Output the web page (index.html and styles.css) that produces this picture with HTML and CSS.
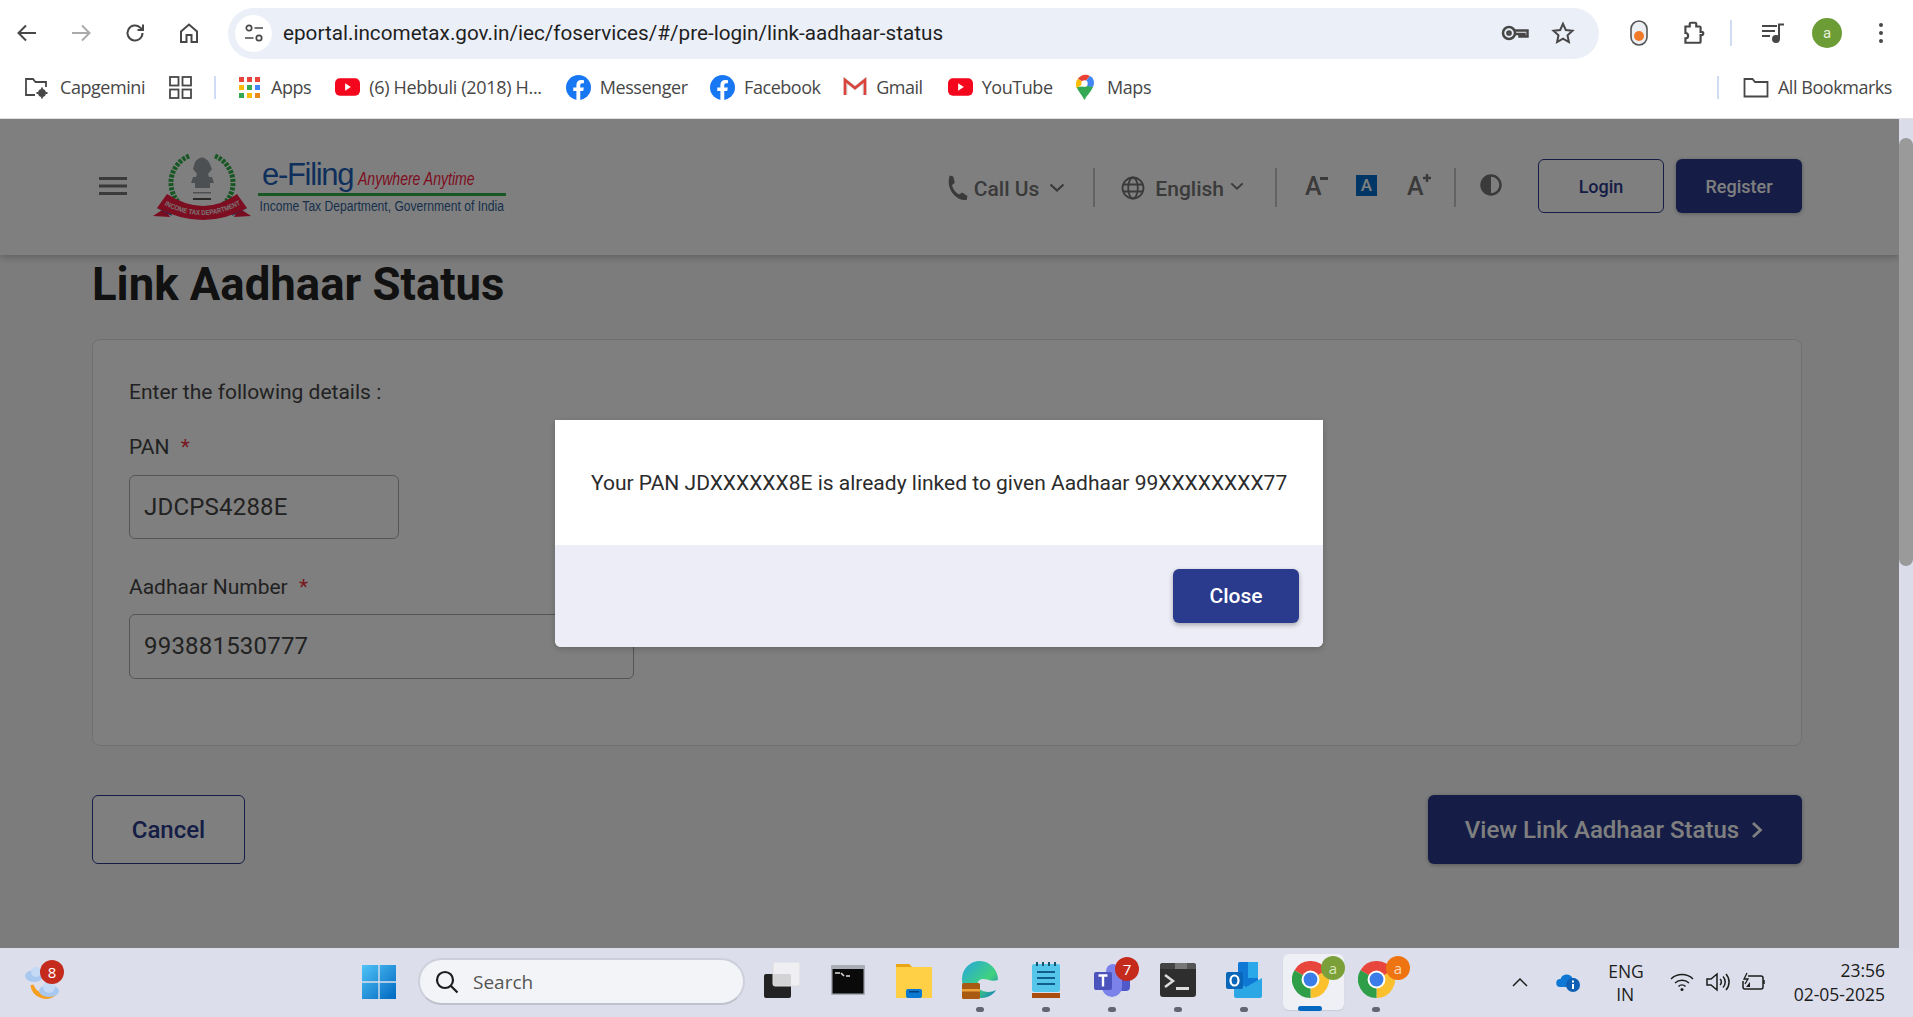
FILE: index.html
```html
<!DOCTYPE html>
<html lang="en">
<head>
<meta charset="utf-8">
<title>Link Aadhaar Status</title>
<link rel="stylesheet" href="styles.css">
</head>
<body>
<svg class="defs" width="0" height="0">
  <symbol id="chrome" viewBox="0 0 24 24">
    <path fill="#e8453c" d="M12 12L1.6 6A12 12 0 0 1 22.4 6Z"/>
    <path fill="#fbc02d" d="M12 12L22.4 6A12 12 0 0 1 12 24Z"/>
    <path fill="#2e9e48" d="M12 12L12 24A12 12 0 0 1 1.6 6Z"/>
    <circle cx="12" cy="12" r="5.8" fill="#fff"/>
    <circle cx="12" cy="12" r="4.5" fill="#3b7de8"/>
  </symbol>
  <symbol id="yt" viewBox="0 0 26 18">
    <rect width="26" height="18" rx="5" fill="#f4061d"/>
    <path fill="#fff" d="M10.5 5.2l6 3.8-6 3.8z"/>
  </symbol>
  <symbol id="fb" viewBox="0 0 24 24">
    <circle cx="12" cy="12" r="12" fill="#1877f2"/>
    <path fill="#fff" d="M16.5 15.4l.6-3.4h-3.4V9.8c0-1 .5-1.9 2-1.9h1.5V5c0 0-1.400-.2-2.700-.2-2.700 0-4.500 1.600-4.500 4.600V12h-3v3.400h3V24h3.700v-8.600z"/>
  </symbol>
</svg>

<div class="browser">
  <div class="toolbar">
    <div class="navbtn"><svg width="24" height="24" viewBox="0 0 24 24" class="ico"><path d="M21 12H4M11 4.500L3.500 12l7.500 7.500"/></svg></div>
    <div class="navbtn"><svg width="24" height="24" viewBox="0 0 24 24" class="ico ico-off"><path d="M3 12h17M13 4.500l7.500 7.500-7.500 7.500"/></svg></div>
    <div class="navbtn"><svg width="24" height="24" viewBox="0 0 24 24" class="ico"><path d="M19.500 12a7.500 7.500 0 1 1-2.400-5.500L20 9M20 3.500V9h-5.500"/></svg></div>
    <div class="navbtn"><svg width="24" height="24" viewBox="0 0 24 24" class="ico"><path d="M4 10.500L12 3.500l8 7V21h-5.500v-7h-5v7H4z"/></svg></div>
    <div class="omnibox">
      <span class="site-chip"><svg width="22" height="22" viewBox="0 0 22 22" class="ico ico-thin"><circle cx="6" cy="6" r="2.700"/><path d="M11.500 6H20M2 16h8.500"/><circle cx="16" cy="16" r="2.700"/></svg></span>
      <span class="url">eportal.incometax.gov.in/iec/foservices/#/pre-login/link-aadhaar-status</span>
      <svg class="omni-key ico" width="28" height="20" viewBox="0 0 28 20"><circle cx="8" cy="10" r="6"/><circle cx="8" cy="10" r="1.600"/><path d="M14 7.500h12.500v6h-3v-2.500h-2.500v2.500h-2.500v-2.500H14"/></svg>
      <svg class="omni-star ico" width="24" height="24" viewBox="0 0 24 24"><path d="M12 2.800l2.800 6.200 6.700.8-5 4.500 1.400 6.700-5.900-3.400-5.900 3.400 1.400-6.700-5-4.500 6.700-.8z"/></svg>
    </div>
    <svg class="ext-pill" width="18" height="26" viewBox="0 0 18 26"><rect x="1" y="1" width="16" height="24" rx="8" fill="#eceff4" stroke="#555" stroke-width="1.600"/><circle cx="9" cy="16" r="5" fill="#f07a28"/></svg>
    <svg class="ext-puzzle ico" width="26" height="26" viewBox="0 0 24 24"><path d="M5 6h4V3.500a1 1 0 0 1 1-1h4a1 1 0 0 1 1 1V6h3a1 1 0 0 1 1 1v4h1a1.500 1.500 0 0 1 0 3h-1v6a1 1 0 0 1-1 1H5v-4a2.500 2.500 0 0 0 0-5z"/></svg>
    <span class="tool-divider"></span>
    <svg class="media ico" width="26" height="24" viewBox="0 0 26 24"><path d="M2 5h15M2 10h13M2 15h8"/><path d="M19 18V3.500h5"/><circle cx="16" cy="18" r="3" class="solid"/></svg>
    <span class="avatar">a</span>
    <span class="kebab"><i></i><i></i><i></i></span>
  </div>
  <div class="bookmarks">
    <span class="bm bm-first"><svg width="26" height="26" viewBox="0 0 26 26" class="ico ico-mid"><path d="M12 21H3V5h7l2.500 3H23v5"/><circle cx="19" cy="19" r="3" class="solid"/><path d="M19 13.500v2M19 22.500v2M13.500 19h2M22.500 19h2"/></svg>Capgemini</span>
    <span class="bm bm-grid"><svg width="23" height="23" viewBox="0 0 23 23" class="ico ico-mid"><rect x="1" y="1" width="8.500" height="8.500"/><rect x="13.500" y="1" width="8.500" height="8.500"/><rect x="1" y="13.500" width="8.500" height="8.500"/><rect x="13.500" y="13.500" width="8.500" height="8.500"/></svg></span>
    <span class="bm-divider"></span>
    <span class="bm bm-apps"><svg width="21" height="21" viewBox="0 0 21 21"><g fill="#e8453c"><rect width="5" height="5"/><rect x="8" width="5" height="5"/><rect x="16" width="5" height="5"/></g><rect y="8" width="5" height="5" fill="#fbbc05"/><rect x="8" y="8" width="5" height="5" fill="#34a853"/><rect x="16" y="8" width="5" height="5" fill="#4285f4"/><rect y="16" width="5" height="5" fill="#34a853"/><rect x="8" y="16" width="5" height="5" fill="#fbbc05"/><rect x="16" y="16" width="5" height="5" fill="#ea8a1c"/></svg>Apps</span>
    <span class="bm bm-wide"><svg width="25" height="18"><use href="#yt"/></svg>(6) Hebbuli (2018) H...</span>
    <span class="bm bm-tight"><svg width="25" height="25"><use href="#fb"/></svg>Messenger</span>
    <span class="bm bm-tight"><svg width="25" height="25"><use href="#fb"/></svg>Facebook</span>
    <span class="bm bm-gmail"><svg width="24" height="20" viewBox="0 0 24 20"><path d="M2.500 18V3.500L12 11l9.500-7.500V18" fill="none" stroke="#d9d9d9" stroke-width="4"/><path d="M2 18V3l10 8 10-8v15" fill="none" stroke="#d9433a" stroke-width="2.600"/></svg>Gmail</span>
    <span class="bm bm-tight"><svg width="25" height="18"><use href="#yt"/></svg>YouTube</span>
    <span class="bm bm-maps"><svg width="19" height="26" viewBox="0 0 19 26"><path fill="#34a853" d="M9.500 26C7 21 3 17 1.500 13L14 12z"/><path fill="#fbbc05" d="M1.500 14C.3 10 1 7 3 4.500l6 5z"/><path fill="#ea4335" d="M3 4.500C5 1.500 10 -1 15 2L9 9z"/><path fill="#4285f4" d="M15 2c4 2 5 7 3 11l-5-.5-4-3z"/><path fill="#34a853" d="M18 13c-2 5-6 8-8.500 13L13 12z"/><circle cx="9.500" cy="9.500" r="3.200" fill="#fff"/></svg>Maps</span>
    <span class="bm-divider bm-divider-end"></span>
    <span class="bm"><svg width="26" height="22" viewBox="0 0 26 22" class="ico ico-mid"><path d="M1.500 3h8l2.500 3h12.500v14.500h-23z"/></svg>All Bookmarks</span>
  </div>
</div>

<div class="screen">
  <div class="viewport">
    <header class="site-header">
      <svg class="burger" width="28" height="18" viewBox="0 0 28 18"><path d="M0 0h28v3H0zM0 7.500h28v3H0zM0 15h28v3H0z"/></svg>
      <div class="logo">
        <svg class="seal" width="100" height="68" viewBox="0 0 100 68">
          <path d="M36 3A29 29 0 0 0 40 58M62 3A29 29 0 0 1 58 58" fill="none" stroke="#2fae46" stroke-width="5" stroke-dasharray="3 1.300"/>
          <path d="M42 9q7-9 14 0l3 7-4 5 1 3h3l2 6h-4v5H42v-5h-4l2-6h3l1-3-4-5zM40 39h18v1.500H40z" fill="#9aa0a6"/>
          <path d="M40 46h18" stroke="#555" stroke-width="2"/>
          <path d="M0 63l12-8 5 9z" fill="#f01a3e"/>
          <path d="M98 63l-12-8-5 9z" fill="#f01a3e"/>
          <path d="M4 55h12l3 8z" fill="#3a62b8"/>
          <path d="M94 55H82l-3 8z" fill="#3a62b8"/>
          <path d="M14 41Q51 65 84 41L94 55Q51 79 4 55Z" fill="#fa1a40"/>
          <path id="ribbon-arc" d="M6 49Q49 75 92 49" fill="none"/>
          <text class="seal-text" textLength="80" lengthAdjust="spacingAndGlyphs"><textPath href="#ribbon-arc" startOffset="6">INCOME TAX DEPARTMENT</textPath></text>
        </svg>
        <div class="logo-text">
          <div class="logo-top"><span class="efiling">e-Filing</span><span class="anywhere">Anywhere Anytime</span></div>
          <div class="logo-sub">Income Tax Department, Government of India</div>
        </div>
      </div>
      <nav class="site-nav">
        <svg class="n-phone" width="28" height="28" viewBox="0 0 24 24"><path d="M6.600 1.500l3.200.7 1.300 5.500-2.400 2.100c1 3.500 3 6.300 6 8l2.700-1.700 4.600 2.900-.7 3.500c-9.500.6-18-10-14.700-20.500z" transform="translate(-1 -1)"/></svg>
        <span class="nav-text n-call">Call Us</span>
        <svg class="chev" width="16" height="9" viewBox="0 0 16 9"><path d="M1.500 1.500L8 7.500l6.500-6"/></svg>
        <span class="nav-divider n-d1"></span>
        <svg class="n-globe" width="24" height="24" viewBox="0 0 24 24"><circle cx="12" cy="12" r="10.500"/><ellipse cx="12" cy="12" rx="4.800" ry="10.500"/><path d="M2 8.500h20M2 15.500h20"/></svg>
        <span class="nav-text n-eng">English</span>
        <svg class="chev n-c2" width="14" height="8" viewBox="0 0 16 9"><path d="M1.500 1.500L8 7.500l6.500-6"/></svg>
        <span class="nav-divider n-d2"></span>
        <span class="fontsize n-am">A<i class="f-minus"></i></span>
        <span class="fontbox">A</span>
        <span class="fontsize n-ap">A<i class="f-plus"></i></span>
        <span class="nav-divider n-d3"></span>
        <svg class="n-contrast" width="22" height="22" viewBox="0 0 22 22"><circle cx="11" cy="11" r="9.500" fill="none" stroke="#757575" stroke-width="2.500"/><path d="M11 1a10 10 0 0 0 0 20z" fill="#757575"/></svg>
        <a class="btn-outline btn-sm n-login">Login</a>
        <a class="btn-solid btn-sm n-reg">Register</a>
      </nav>
    </header>
    <main class="content">
      <h1 class="title">Link Aadhaar Status</h1>
      <section class="card">
        <p class="lead">Enter the following details :</p>
        <label class="label label-pan">PAN <b>*</b></label>
        <div class="field field-pan">JDCPS4288E</div>
        <label class="label label-aad">Aadhaar Number <b>*</b></label>
        <div class="field field-aad">993881530777</div>
      </section>
      <div class="actions">
        <a class="btn-outline btn-lg btn-cancel">Cancel</a>
        <a class="btn-solid btn-lg btn-view">View Link Aadhaar Status<svg width="12" height="18" viewBox="0 0 12 18"><path d="M2 2l7.500 7L2 16"/></svg></a>
      </div>
    </main>
    <div class="backdrop"></div>
    <div class="modal">
      <div class="modal-body">Your PAN JDXXXXXX8E is already linked to given Aadhaar 99XXXXXXXX77</div>
      <div class="modal-foot"><a class="btn-close">Close</a></div>
    </div>
  </div>
  <div class="scrollbar"><span class="thumb"></span></div>
</div>

<footer class="taskbar">
  <div class="weather">
    <svg width="40" height="42" viewBox="0 0 40 42"><path d="M8 24a14 14 0 0 0 24 8 16 16 0 0 1-24-8z" fill="#f59e1f" stroke="#f59e1f" stroke-width="3"/><ellipse cx="10" cy="15" rx="9" ry="6" fill="#a9c8ef"/><ellipse cx="12" cy="11" rx="5" ry="5" fill="#c4daf5"/><ellipse cx="25" cy="30" rx="10" ry="6" fill="#a9c8ef"/><ellipse cx="25" cy="26" rx="6" ry="6" fill="#c4daf5"/></svg>
    <span class="badge badge-weather">8</span>
  </div>
  <svg class="start" width="34" height="34" viewBox="0 0 34 34"><defs><linearGradient id="win" x1="0" y1="0" x2="1" y2="1"><stop offset="0" stop-color="#4fc3f7"/><stop offset="1" stop-color="#0067c0"/></linearGradient></defs><path fill="url(#win)" d="M0 0h16.300v16.300H0zM17.700 0H34v16.300H17.700zM0 17.700h16.300V34H0zM17.700 17.700H34V34H17.700z"/></svg>
  <div class="search"><svg width="24" height="24" viewBox="0 0 24 24"><circle cx="10" cy="10" r="8"/><path d="M16 16l6.500 6.500"/></svg><span>Search</span></div>
  <div class="apps">
    <div class="slot"><svg width="36" height="36" viewBox="0 0 36 36"><rect x="0" y="12" width="27" height="24" rx="2" fill="#222"/><rect x="9" y="0" width="27" height="24" rx="2" fill="#f2f2f4" fill-opacity=".85" stroke="#ddd"/></svg></div>
    <div class="slot"><svg width="34" height="30" viewBox="0 0 34 30"><rect width="34" height="30" rx="1" fill="#a9adb6"/><rect x="1.500" y="4" width="31" height="24.500" fill="#0a0a0a"/><path d="M4 8h5M10 8l3 3M15 11h4" stroke="#ddd" stroke-width="1.500"/></svg></div>
    <div class="slot"><svg width="36" height="36" viewBox="0 0 36 36"><path d="M0 2h13l3 3h20v31H0z" fill="#ffcf45"/><path d="M0 2h13l3 3H0z" fill="#e9a516"/><rect x="10" y="27" width="16" height="9" rx="2" fill="#0b78d1"/><rect x="13" y="29" width="10" height="1.500" fill="#053e78"/></svg></div>
    <div class="slot dot"><svg width="36" height="38" viewBox="0 0 36 38"><defs><linearGradient id="edge" x1="0" y1="0" x2="1" y2="1"><stop offset="0" stop-color="#26a6e0"/><stop offset=".6" stop-color="#40d27e"/><stop offset="1" stop-color="#0f6fc4"/></linearGradient></defs><path d="M18 0A18 18 0 0 0 0 18c0 8 4 15 14 19h6c6 0 12-4 14-8-5 3-16 3-18-4-1-4 1-7 5-7 5 0 8 3 15 1C36 9 28 0 18 0z" fill="url(#edge)"/><rect y="22" width="18" height="16" rx="1.500" fill="#a85a12"/><rect y="28" width="18" height="2.500" fill="#e9a23c"/></svg></div>
    <div class="slot dot"><svg width="28" height="36" viewBox="0 0 28 36"><rect y="2" width="28" height="28" rx="2" fill="#56c5ea"/><path d="M5 10h18M5 16h18M5 22h18" stroke="#0f5f8a" stroke-width="2"/><path d="M5 0v4M11 0v4M17 0v4M23 0v4" stroke="#14566f" stroke-width="2"/><rect y="31" width="28" height="5" fill="#a84c10"/></svg></div>
    <div class="slot dot"><svg width="36" height="34" viewBox="0 0 36 34"><circle cx="27" cy="10" r="6" fill="#7b83eb"/><rect x="17" y="14" width="19" height="14" rx="4" fill="#5059c9"/><circle cx="19" cy="8" r="7" fill="#7b83eb"/><path d="M8 12h20v12a10 10 0 0 1-20 0z" fill="#7b83eb"/><rect y="9" width="18" height="18" rx="2" fill="#4b53bc"/><path d="M4.500 12.500h9M9 12.500v11" stroke="#fff" stroke-width="2.400"/></svg><span class="badge badge-teams">7</span></div>
    <div class="slot dot"><svg width="36" height="34" viewBox="0 0 36 34"><rect width="36" height="34" rx="3" fill="#2e2e2e"/><path d="M0 3a3 3 0 0 1 3-3h12v6H0z" fill="#444"/><path d="M15 0h12v6H15z" fill="#777"/><path d="M27 0h6a3 3 0 0 1 3 3v3h-9z" fill="#555"/><path d="M5 12l8 6-8 6" fill="none" stroke="#ddd" stroke-width="2.500"/><rect x="16" y="24" width="13" height="3" fill="#ddd"/></svg></div>
    <div class="slot dot"><svg width="36" height="36" viewBox="0 0 36 36"><rect x="12" y="0" width="20" height="32" rx="1.500" fill="#0f78d4"/><path d="M22 0h10v8H22zM22 8h10v8H22z" fill="#29a8ea"/><path d="M8 18l12 7 16-9v18a2 2 0 0 1-2 2H10a2 2 0 0 1-2-2z" fill="#2ca7e6"/><rect y="10" width="17" height="17" rx="2" fill="#0a66b8"/><ellipse cx="8.500" cy="18.500" rx="4" ry="5" fill="none" stroke="#fff" stroke-width="2.200"/></svg></div>
    <div class="slot slot-active"><svg width="37" height="37"><use href="#chrome"/></svg><span class="badge badge-profile">a</span><span class="underline"></span></div>
    <div class="slot dot"><svg width="37" height="37"><use href="#chrome"/></svg><span class="badge badge-orange">a</span></div>
  </div>
  <div class="tray">
    <svg class="t-chev" width="16" height="10" viewBox="0 0 16 10"><path d="M1 9l7-7 7 7"/></svg>
    <svg class="t-cloud" width="24" height="20" viewBox="0 0 24 20"><path d="M4 15a4 4 0 0 1 .5-8 6.500 6.500 0 0 1 12-1 4.500 4.500 0 0 1 1 9z" fill="#0f78d4"/><circle cx="17" cy="13" r="7" fill="#0f5fb5"/><rect x="16" y="12" width="2" height="5" fill="#fff"/><rect x="16" y="8.500" width="2" height="2" fill="#fff"/></svg>
    <div class="t-lang">ENG<br>IN</div>
    <svg class="t-wifi" width="24" height="20" viewBox="0 0 24 20"><path d="M1 7a16 16 0 0 1 22 0M5 11a10.500 10.500 0 0 1 14 0M8.500 14.500a5 5 0 0 1 7 0"/><circle cx="12" cy="17.500" r="1.500" class="solid"/></svg>
    <svg class="t-vol" width="24" height="20" viewBox="0 0 24 20"><path d="M1 7v6h4l6 5V2L5 7zM14 7a4 4 0 0 1 0 6M17 4.500a8 8 0 0 1 0 11M20 2a12 12 0 0 1 0 16"/></svg>
    <svg class="t-batt" width="24" height="20" viewBox="0 0 24 20"><path d="M6 4h13a2 2 0 0 1 2 2v9a2 2 0 0 1-2 2H3a2 2 0 0 1-2-2V9"/><path d="M22 8v4"/><path d="M5 1L2 7h4l-3 5" class="thin"/><path d="M4 15l4-5v5z" class="solid"/></svg>
    <div class="t-clock">23:56<br>02-05-2025</div>
  </div>
</footer>
</body>
</html>
```
FILE: styles.css
```css
*{box-sizing:border-box}
html,body{margin:0;padding:0;height:1017px;overflow:hidden}
body{display:flex;flex-direction:column;font-family:Roboto,"Liberation Sans",sans-serif;background:#fff;width:1913px}
.defs{position:absolute}
a{display:inline-flex;align-items:center;justify-content:center}
.ico{fill:none;stroke:#474747;stroke-width:2;flex:none}
.ico-off{stroke:#aaa}
.ico-thin{stroke-width:1.700}
.ico-mid{stroke-width:1.800}
.solid{fill:#474747}

/* browser chrome */
.browser{height:119px;flex:none;background:#fff;border-bottom:1px solid #e1e1e1}
.toolbar{height:65px;display:flex;align-items:center;padding-top:1px}
.navbtn{width:54px;display:flex;justify-content:center}
.omnibox{width:1371px;height:51px;margin-left:12px;border-radius:26px;background:#ebeff8;display:flex;align-items:center;padding-left:7px}
.site-chip{width:37px;height:37px;border-radius:50%;background:#fff;display:flex;align-items:center;justify-content:center;flex:none}
.url{margin-left:11px;font-size:20.700px;color:#1f1f1f}
.omni-key{margin-left:auto;stroke-width:2.500}
.omni-star{margin-left:22px;margin-right:24px}
.ext-pill{margin-left:31px}
.ext-puzzle{margin-left:32px}
.tool-divider{width:2px;height:26px;background:#cfdcf3;margin-left:24px}
.media{margin-left:28px}
.avatar{width:30px;height:30px;border-radius:50%;background:#6b9c35;color:#e8f0dc;font-size:15px;display:flex;align-items:center;justify-content:center;margin-left:26px}
.kebab{margin-left:37px;display:flex;flex-direction:column;gap:4px}
.kebab i{width:4px;height:4px;border-radius:50%;background:#474747}
.bookmarks{height:53px;display:flex;align-items:center;padding:0 0 9px 23px;font-size:18px;color:#474747;font-family:"Open Sans",Roboto,sans-serif}
.bm{display:flex;align-items:center;gap:9px;margin-right:24px;letter-spacing:-.45px;white-space:nowrap}
.bm-first{gap:11px}
.bm-grid{margin-right:22px}
.bm-apps{gap:11px}
.bm-wide{letter-spacing:-.31px}
.bm-tight{margin-right:22.500px}
.bm-gmail{margin-right:25px}
.bm-maps{gap:13px}
.bm-divider{width:2px;height:23px;background:#cfdcf3;margin-right:23px}
.bm-divider-end{margin-left:auto;margin-right:24px}
.bookmarks .bm:last-child{margin-right:21px}

/* page */
.screen{height:829px;flex:none;display:flex}
.viewport{position:relative;flex:1;background:#f9f9f9;overflow:hidden}
.scrollbar{width:14px;background:#dadcea;padding-top:19px}
.thumb{display:block;height:428px;border-radius:7px;background:#9a9a9a}
.site-header{height:136px;background:#fff;box-shadow:0 2px 8px rgba(0,0,0,.25);display:flex;align-items:center;padding:0 97px 0 99px;position:relative}
.burger{fill:#757575;flex:none;margin-top:-3px}
.logo{display:flex;align-items:flex-start;margin-left:26px}
.seal{flex:none}
.seal-text{font:bold 7px "Liberation Sans",sans-serif;fill:#f5e6e6}
.logo-text{margin-left:5px;font-family:"Liberation Sans",sans-serif;width:248px}
.logo-top{display:flex;align-items:baseline;padding:4px 0 0 4px;border-bottom:3px solid #32b045;height:43px;white-space:nowrap}
.efiling{font-size:31px;letter-spacing:-1.300px;color:#1e5fb8;line-height:35px}
.anywhere{display:inline-block;font-size:18px;font-style:italic;color:#fb1840;margin-left:5px;transform:scaleX(.78);transform-origin:left}
.logo-sub{font-size:15.500px;color:#2f5f96;white-space:nowrap;padding-left:2px;margin-top:1px;transform:scaleX(.78);transform-origin:left}
.site-nav{display:flex;align-items:center;margin-left:auto}
.nav-text{font-size:21px;font-weight:500;color:#757575;margin-top:4px;white-space:nowrap}
.n-phone{fill:#757575;flex:none;margin-top:4px}
.n-call{margin-left:3px}
.chev{fill:none;stroke:#757575;stroke-width:2.200;margin-left:10px;flex:none}
.nav-divider{width:2px;height:39px;background:#c6c6c6}
.n-d1{margin-left:28px}
.n-globe{fill:none;stroke:#757575;stroke-width:1.800;margin-left:26px;flex:none;margin-top:2px}
.n-eng{margin-left:10px}
.n-c2{margin-left:6px;margin-top:-3px}
.n-d2{margin-left:31px}
.fontsize{position:relative;font-size:25px;font-weight:500;color:#757575;line-height:26px;width:22px}
.fontsize i{position:absolute;background:#757575}
.f-minus{width:8px;height:3px;right:-1px;top:3px}
.f-plus{width:8px;height:8px;right:-2px;top:0;clip-path:polygon(35% 0,65% 0,65% 35%,100% 35%,100% 65%,65% 65%,65% 100%,35% 100%,35% 65%,0 65%,0 35%,35% 35%)}
.n-am{margin-left:28px}
.fontbox{width:21px;height:21px;background:#006dcc;color:#fff;font-size:17px;font-weight:500;display:flex;align-items:center;justify-content:center;margin-left:29px;margin-top:-4px}
.n-ap{margin-left:30px}
.n-d3{margin-left:25px}
.n-contrast{margin-left:24px;margin-top:-4px;flex:none}
.btn-outline{border:1.500px solid #2a3a8c;color:#2a3a8c;background:#fff;border-radius:6px;font-weight:500}
.btn-solid{background:#2a3a8c;color:#fff;border-radius:6px;font-weight:500;box-shadow:0 1px 4px rgba(0,0,0,.3)}
.btn-sm{width:126px;height:54px;font-size:18px;margin-top:-2px}
.n-login{margin-left:36px}
.n-reg{margin-left:12px}
.content{padding:0 97px 0 92px}
.title{margin:3px 0 0;font-size:45.500px;line-height:54px;font-weight:700;color:#222}
.card{margin-top:27px;height:407px;background:#fff;border:1px solid #e0e0e0;border-radius:8px;padding:40px 36px 0}
.lead{margin:0;font-size:21px;line-height:24px;color:#444}
.label{display:block;font-size:21px;line-height:24px;color:#444;margin-top:31px}
.label b{font-weight:400;color:#f03040;margin-left:6px}
.label-aad{margin-top:36px}
.field{margin-top:16px;height:64px;border:1px solid #aaa;border-radius:6px;font-size:24px;color:#444;display:flex;align-items:center;padding:0 14px 1px;letter-spacing:.2px}
.field-pan{width:270px}
.field-aad{width:505px;margin-top:15px;height:65px}
.actions{margin-top:49px;display:flex;justify-content:space-between}
.btn-lg{height:69px;font-size:24px}
.btn-cancel{width:153px}
.btn-view{width:374px;gap:12px;padding-right:2px}
.btn-view svg{fill:none;stroke:#fff;stroke-width:2.800}

/* dialog */
.backdrop{position:absolute;inset:0;background:rgba(0,0,0,.5)}
.modal{position:absolute;left:555px;top:301px;width:768px;height:227px;background:#fff;border-radius:0 0 6px 6px;overflow:hidden;box-shadow:0 2px 6px rgba(0,0,0,.2)}
.modal-body{height:125px;display:flex;align-items:center;padding-left:36px;font-size:21px;color:#2b2b2b;white-space:nowrap}
.modal-foot{height:102px;background:#ecedf6;display:flex;justify-content:flex-end;padding:24px 24px 0 0}
.btn-close{width:126px;height:54px;background:#2a3a8c;color:#fff;font-size:21px;font-weight:500;border-radius:6px;box-shadow:0 2px 5px rgba(0,0,0,.3)}

/* taskbar */
.taskbar{flex:1;background:#dcdfeb;display:flex;align-items:center;padding-left:24px;font-family:"Open Sans",Roboto,sans-serif;color:#1c1c1c}
.weather{position:relative;width:40px;height:42px;margin-top:-2px;flex:none}
.badge{position:absolute;width:24px;height:24px;border-radius:50%;display:flex;align-items:center;justify-content:center;color:#fff;font-size:15px;background:#c42b1c}
.badge-weather{left:16px;top:-1px}
.start{margin-left:298px;flex:none;margin-top:-1px}
.search{width:327px;height:47px;margin-left:22px;border-radius:24px;background:#f3f4f8;border:2px solid #cdd0da;border-bottom-color:#bfc2cc;display:flex;align-items:center;padding-left:15px;gap:14px;font-size:19px;color:#555;flex:none;margin-top:-2px}
.search svg{fill:none;stroke:#1c1c1c;stroke-width:2.200}
.apps{display:flex;margin-left:4px}
.slot{position:relative;width:66px;height:69px;display:flex;align-items:center;justify-content:center;padding-bottom:6px}
.slot.dot::after{content:"";position:absolute;left:29px;bottom:5px;width:8px;height:5px;border-radius:3px;background:#636672}
.badge-teams{left:36px;top:9px}
.slot-active::before{content:"";position:absolute;left:6px;right:-1px;top:6px;bottom:7px;border-radius:6px;background:#eff0f5;box-shadow:0 1px 1px #c8cad4}
.slot-active svg,.slot-active .badge{z-index:1}
.badge-profile{left:44px;top:8px;background:#7ba03a;color:#d8e6bd}
.badge-orange{left:43px;top:8px;background:#ee7311;color:#fbd9b8}
.underline{position:absolute;z-index:1;left:21px;bottom:6px;width:24px;height:5px;border-radius:3px;background:#0067c0}
.tray{margin-left:auto;display:flex;align-items:center;padding-right:28px;margin-top:-2px}
.tray svg{flex:none;fill:none;stroke:#1c1c1c;stroke-width:1.500}
.tray .solid{fill:#1c1c1c;stroke:none}
.tray .thin{stroke-width:1.300}
.t-chev{margin-right:28px}
.tray .t-cloud{stroke:none}
.t-lang{margin-left:28px;width:34px;text-align:center;font-size:17.500px;line-height:23px;white-space:nowrap;margin-top:2px}
.t-wifi{margin-left:28px}
.t-vol{margin-left:12px}
.t-batt{margin-left:12px}
.t-clock{margin-left:27.500px;text-align:right;font-size:17.500px;line-height:24px;white-space:nowrap}
```
